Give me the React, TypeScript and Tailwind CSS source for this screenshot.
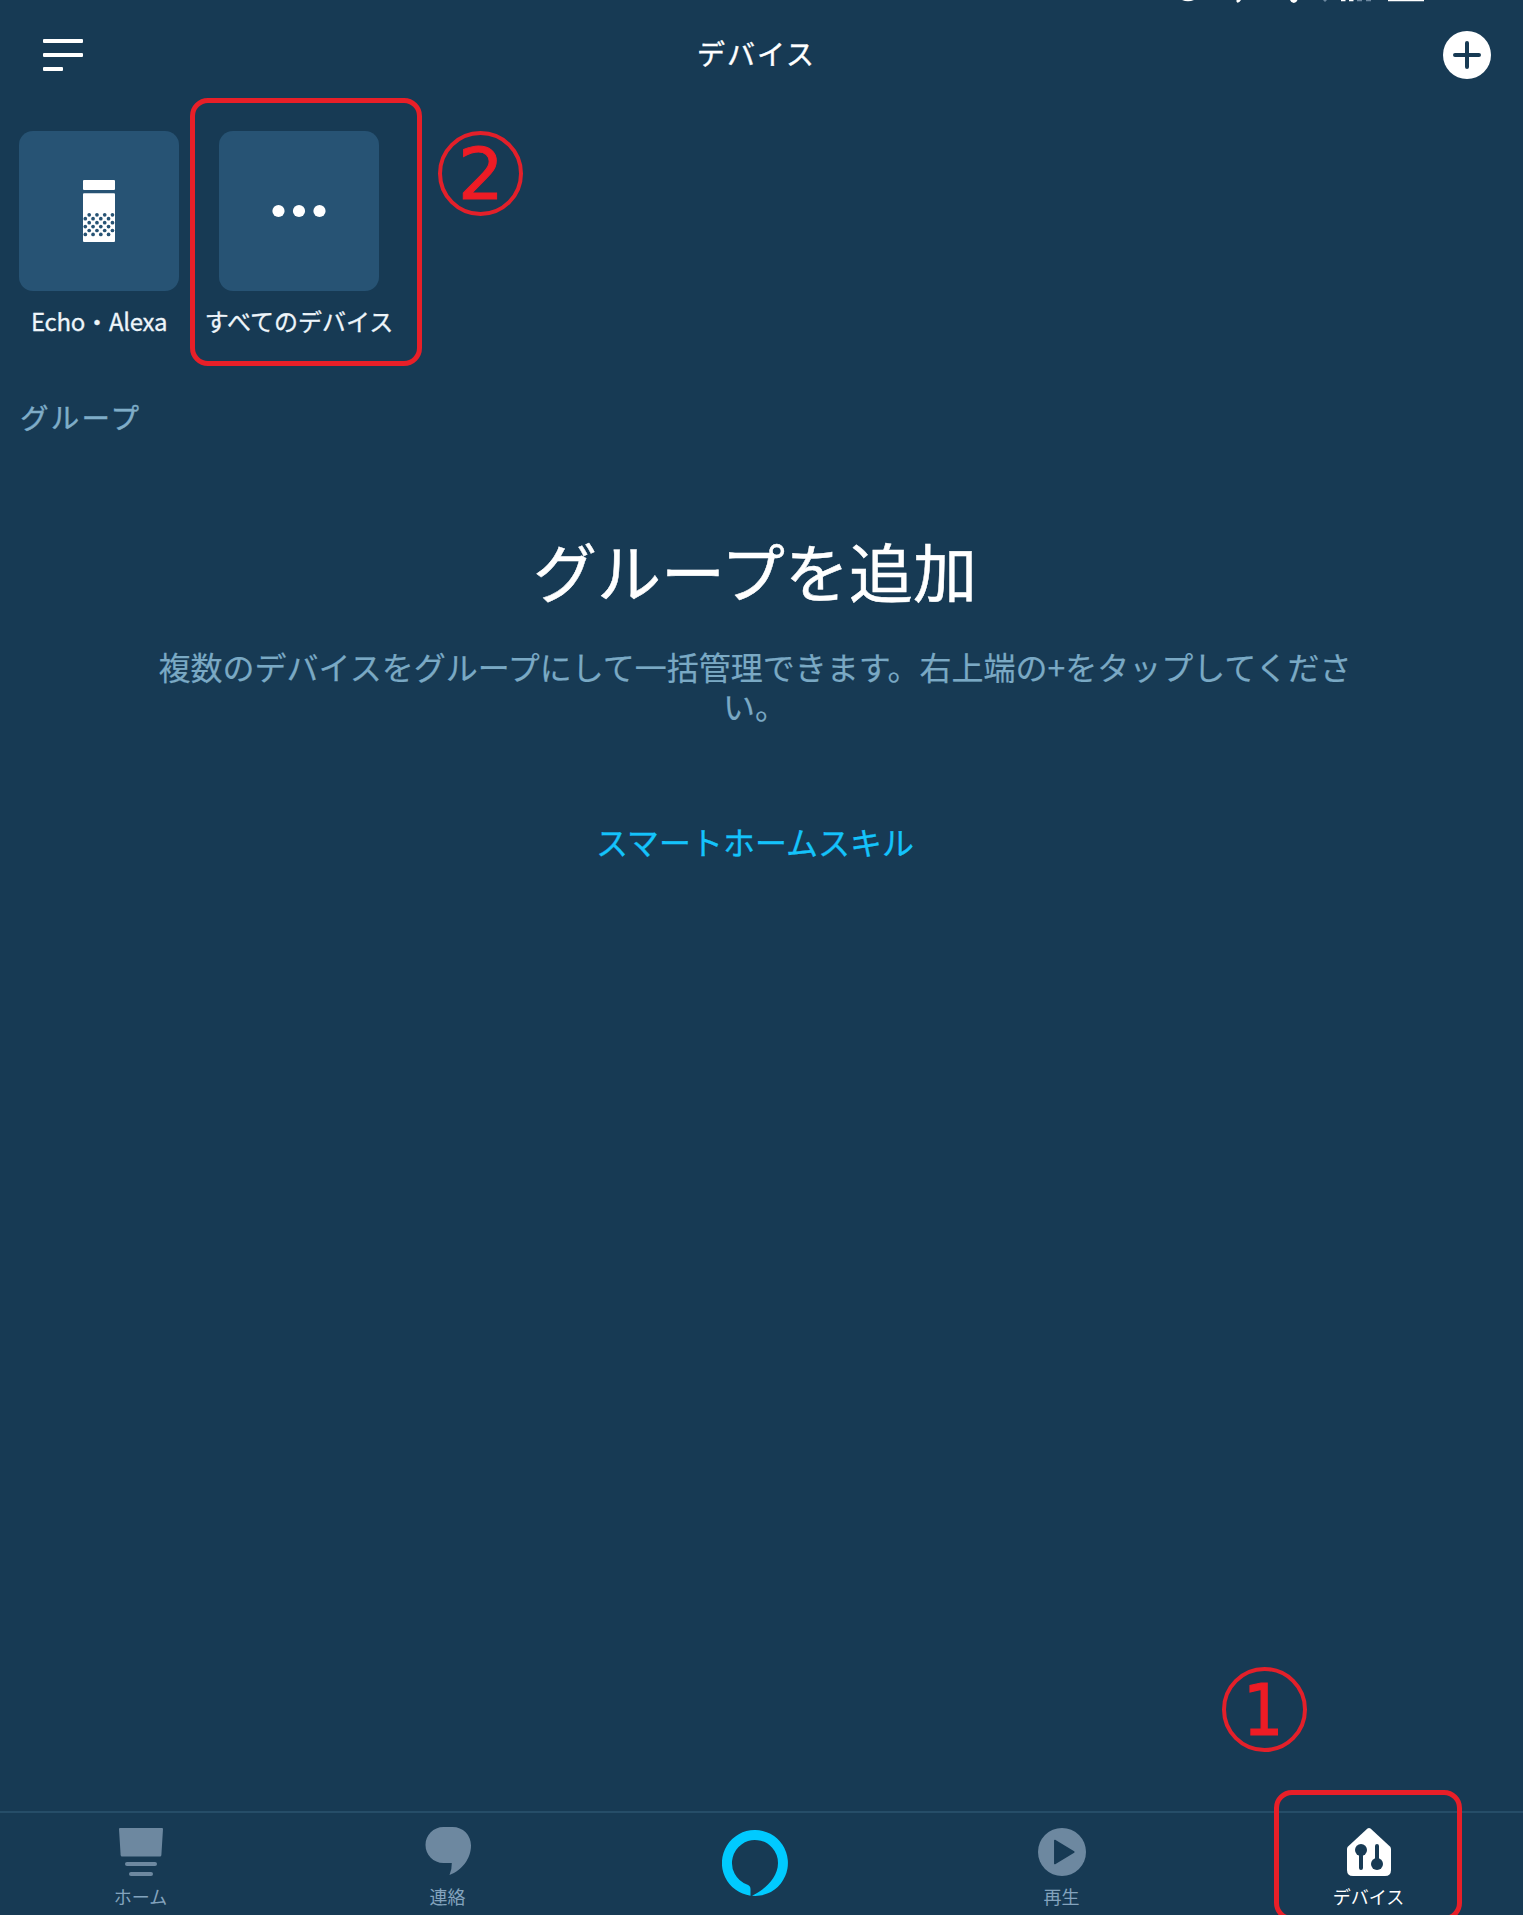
import React from "react";

function StatusBarRemnant() {
  return (
    <svg className="absolute left-0 top-0" width="1523" height="4" viewBox="0 0 1523 4" fill="white">
      <path d="M1182 0h12q-6 2.4-12 0z" />
      <path d="M1236.500 0h4.500q-1.500 2.500-3.500 2.800q-1.500-.5-1-2.800z" />
      <path d="M1290 0h7.500q-1 2.800-3.700 3q-2.800-.2-3.800-3z" />
      <path d="M1323 0h4l-2 2z" fill="#6d88a0" />
      <path d="M1341 0h4.500v1.300h-4.500zM1349 0h4.500v1.300h-4.500z" />
      <path d="M1357 0h5v1.200h-5zM1366 0h5v1.200h-5z" fill="#6d88a0" />
      <path d="M1388 0h36v1.200h-36z" />
    </svg>
  );
}

function EchoIcon() {
  const rows = [0, 1, 2, 3, 4, 5];
  return (
    <svg width="32" height="62" viewBox="0 0 32 62">
      <rect width="32" height="10" rx="1" fill="white" />
      <rect y="13.200" width="32" height="48.800" rx="1" fill="white" />
      <g fill="#275374">
        {rows.map((r) =>
          [0, 1, 2, 3].map((c) => (
            <circle key={`${r}-${c}`} cx={(r % 2 ? 2.3 : 6.2) + c * 7.75} cy={34.8 + r * 3.92} r="1.850" />
          ))
        )}
      </g>
    </svg>
  );
}

function Tile({ children, label }: { children: React.ReactNode; label: React.ReactNode }) {
  return (
    <div className="flex w-40 flex-col items-center">
      <div className="flex h-40 w-40 items-center justify-center rounded-[14px] bg-[#275374]">{children}</div>
      <div className="mt-3 h-9 whitespace-nowrap text-[24px] leading-9 text-[#eef5fa] [-webkit-text-stroke:0.3px]">{label}</div>
    </div>
  );
}

function NavItem({ label, active, children }: { label: string; active?: boolean; children: React.ReactNode }) {
  return (
    <div className={`flex flex-col items-center ${active ? "text-white" : "text-[#83a3bd]"}`}>
      <div className="mt-[14px] h-[50px]">{children}</div>
      <div className="mt-[7px] text-[18px] leading-6">{label}</div>
    </div>
  );
}

export default function App() {
  return (
    <div className="relative flex h-[1915px] w-[1523px] flex-col overflow-hidden bg-[#173a54] font-['Noto_Sans_CJK_JP',sans-serif] text-white">
      <StatusBarRemnant />

      <header className="flex h-[131px] items-start justify-between pl-[43px] pr-8">
        <svg className="mt-[39px]" width="48" height="32" viewBox="0 0 48 32" fill="white">
          <rect width="40" height="4" rx="1" />
          <rect y="14" width="40" height="4" rx="1" />
          <rect y="28" width="20" height="4" rx="1" />
        </svg>
        <h1 className="mt-[33px] pr-[21px] text-[28px] leading-10 tracking-[2px] [-webkit-text-stroke:0.4px]">デバイス</h1>
        <svg className="mt-[31px]" width="48" height="48" viewBox="0 0 48 48">
          <circle cx="24" cy="24" r="24" fill="white" />
          <path d="M24 12v24M12 24h24" stroke="#173a54" strokeWidth="4" strokeLinecap="round" />
        </svg>
      </header>

      <section className="flex gap-10 pl-[19px]">
        <Tile
          label={
            <>
              <span className="tracking-[-0.3px]">Echo</span>・<span className="tracking-[-0.3px]">Alexa</span>
            </>
          }
        >
          <EchoIcon />
        </Tile>
        <Tile label="すべてのデバイス">
          <svg width="54" height="14" viewBox="0 0 54 14" fill="white">
            <circle cx="6.500" cy="7" r="6.100" />
            <circle cx="27" cy="7" r="6.100" />
            <circle cx="47.500" cy="7" r="6.100" />
          </svg>
        </Tile>
      </section>

      <h2 className="ml-5 mt-[58px] text-[28.5px] leading-10 tracking-[2.2px] text-[#7fadc8] [-webkit-text-stroke:0.4px]">グループ</h2>

      <main className="flex w-[1510px] flex-1 flex-col items-center">
        <p className="mt-[88px] text-[64px] leading-[88px] [-webkit-text-stroke:0.5px]">グループを追加</p>
        <p className="mt-[34px] w-[1200px] text-center text-[32px] leading-[39px] text-[#7aa9c4] [-webkit-text-stroke:0.2px]">
          複数のデバイスをグループにして一括管理できます。右上端の+をタップしてくださ
          <br />
          い。
        </p>
        <a className="mt-[92px] text-[32px] leading-[48px] text-[#14c3fb] [-webkit-text-stroke:0.3px]">スマートホームスキル</a>
      </main>

      <nav className="h-[104px] w-[1523px] border-t-2 border-[#264d68]">
        <div className="-ml-[13px] grid w-[1535px] grid-cols-5">
          <NavItem label="ホーム">
            <svg width="48" height="50" viewBox="0 0 48 50" fill="#6d88a0">
              <path d="M3 1h42q1 0 1 1l-1.600 26q-.2 1.500-1.400 1.500H5q-1.200 0-1.400-1.500L2 2q0-1 1-1z" />
              <rect x="8" y="35" width="32" height="4" rx="2" />
              <rect x="12" y="45" width="24" height="4" rx="2" />
            </svg>
          </NavItem>
          <NavItem label="連絡">
            <svg width="48" height="50" viewBox="0 0 48 50" fill="#6d88a0">
              <path d="M19.500 0h9C39 0 47 8 47 18.500C47 31.500 38 43.500 25.500 48Q28 42 27.800 36H19.500C9.500 36 1.500 28 1.500 18S9.500 0 19.500 0z" />
            </svg>
          </NavItem>
          <div className="flex flex-col items-center">
            <svg className="mt-[17px]" width="66" height="66" viewBox="0 0 66 66" fill="#00caff">
              <path d="M28.500 65.700A33 33 0 1 1 38 65.600Q34 66.200 30 65.800C41 60.500 56 49 56 33A23 23 0 1 0 25 54.600Q28.500 55.900 28.500 59z" />
            </svg>
          </div>
          <NavItem label="再生">
            <svg width="48" height="50" viewBox="0 0 48 50">
              <circle cx="24" cy="25" r="24" fill="#6d88a0" />
              <path d="M16.800 13.500l19 11.500-19 11.500z" fill="#173a54" stroke="#173a54" strokeWidth="1.500" strokeLinejoin="round" />
            </svg>
          </NavItem>
          <NavItem label="デバイス" active>
            <svg width="48" height="50" viewBox="0 0 48 50">
              <path d="M22.500 1.600q1.500-1.200 3 0L44.700 19.200Q46 20.400 46 22V43Q46 49 40 49H8Q2 49 2 43V22q0-1.600 1.300-2.800z" fill="white" />
              <g fill="#173a54" stroke="#173a54" strokeWidth="4" strokeLinecap="round">
                <circle cx="16" cy="23" r="6" strokeWidth="0" />
                <path d="M16 24v17M32 19v18" />
                <circle cx="32" cy="37" r="6" strokeWidth="0" />
              </g>
            </svg>
          </NavItem>
        </div>
      </nav>

      <div className="absolute left-[190px] top-[98px] h-[268px] w-[232px] rounded-[18px] border-[5px] border-[#e81f28]" />
      <div className="absolute left-[438px] top-[131px] flex h-[85px] w-[85px] items-center justify-center rounded-full border-4 border-[#e3202a] font-['DejaVu_Sans',sans-serif] text-[72px] leading-none text-[#ee1c25]">
        <span className="pl-px [-webkit-text-stroke:1px_#ee1c25]">2</span>
      </div>
      <div className="absolute left-[1274px] top-[1790px] h-[131px] w-[188px] rounded-[18px] border-[5px] border-[#e81f28]" />
      <div className="absolute left-[1222px] top-[1667px] flex h-[85px] w-[85px] items-center justify-center rounded-full border-4 border-[#e3202a] font-['DejaVu_Sans',sans-serif] text-[72px] leading-none text-[#ee1c25]">
        <span className="scale-x-[0.88] pr-[3px] [-webkit-text-stroke:1.200px_#ee1c25]">1</span>
      </div>
    </div>
  );
}
